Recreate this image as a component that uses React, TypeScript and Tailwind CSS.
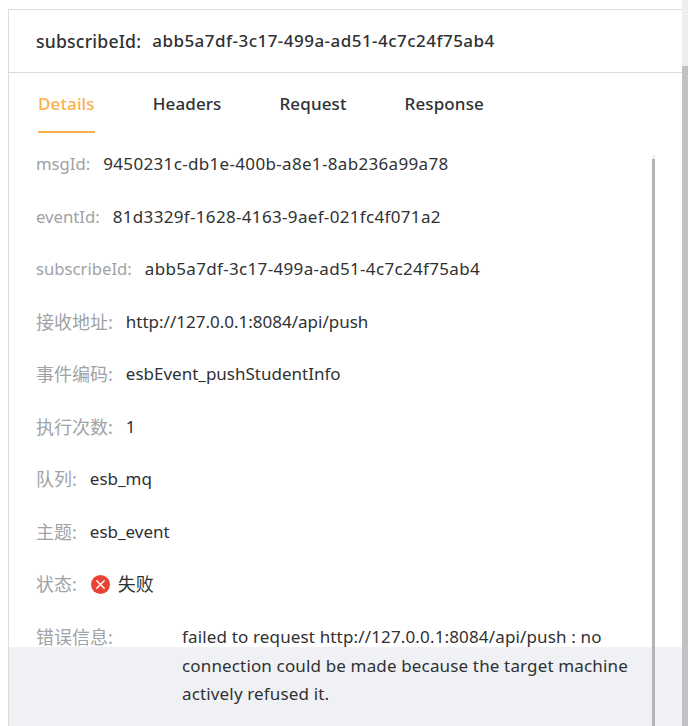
import React from "react";

const font = "[font-family:'Noto_Sans','Noto_Sans_CJK_SC',sans-serif]";

const rows: [string, string, boolean][] = [
  ["msgId:", "9450231c-db1e-400b-a8e1-8ab236a99a78", false],
  ["eventId:", "81d3329f-1628-4163-9aef-021fc4f071a2", false],
  ["subscribeId:", "abb5a7df-3c17-499a-ad51-4c7c24f75ab4", false],
  ["接收地址:", "http://127.0.0.1:8084/api/push", true],
  ["事件编码:", "esbEvent_pushStudentInfo", true],
  ["执行次数:", "1", true],
  ["队列:", "esb_mq", true],
  ["主题:", "esb_event", true],
];

function FailIcon() {
  return (
    <svg className="h-[19px] w-[19px] shrink-0" viewBox="0 0 19 19">
      <circle cx="9.5" cy="9.5" r="9.5" fill="#ea4335" />
      <path d="M5.8 5.8l7.4 7.4M13.2 5.8l-7.4 7.4" stroke="#fff" strokeWidth="1.5" strokeLinecap="round" />
    </svg>
  );
}

export default function App() {
  return (
    <div className={`relative h-[726px] w-[688px] overflow-hidden bg-white text-[17px] text-[#303133] ${font}`}>
      <div className="ml-2 mt-[9px] mr-[6px] h-[717px] border-l border-t border-[#dcdcdc]">
        <div className="flex h-[63px] items-center gap-[11px] border-b border-[#dcdcdc] pl-[27px] font-medium text-[#303133]">
          <span className="text-[17.6px] tracking-[0.2px]">subscribeId:</span>
          <span className="tracking-[0.47px]">abb5a7df-3c17-499a-ad51-4c7c24f75ab4</span>
        </div>
        <div className="flex gap-[58px] pl-[29px] pt-[18px] font-medium tracking-[0.12px]">
          <div className="h-[42px] border-b-2 border-[#fbb04c] text-[#fbb04c]">Details</div>
          <div>Headers</div>
          <div>Request</div>
          <div>Response</div>
        </div>
        <div className="flex flex-col pl-[27px] pt-[18px]">
          {rows.map(([label, value, cjk]) => (
            <div key={label} className="flex h-[52.5px] gap-[13px] leading-[26px]">
              <span className={cjk ? "text-[18px] text-[#a0a2a6]" : "text-[16.7px] text-[#a0a2a6]"}>{label}</span>
              <span className={cjk ? "" : "tracking-[0.33px]"}>{value}</span>
            </div>
          ))}
          <div className="flex h-[40px] items-start gap-[14px] leading-[26px]">
            <span className="text-[18px] text-[#a0a2a6]">状态:</span>
            <span className="flex h-[26px] items-center gap-[8px]">
              <FailIcon />
              <span className="text-[18px]">失败</span>
            </span>
          </div>
          <div className="relative z-10 mt-[12px] flex leading-[28.5px]">
            <span className="w-[146px] shrink-0 text-[18px] text-[#a0a2a6]">错误信息:</span>
            <span className="w-[450px] tracking-[0.15px]">
              failed to request http://127.0.0.1:8084/api/push : no connection could be made because the target machine
              actively refused it.
            </span>
          </div>
        </div>
      </div>
      <div className="absolute bottom-0 left-[9px] right-[6px] h-[79px] bg-[#eff1f5]" />
      <div className="absolute bottom-0 right-[33px] top-[159px] w-[3px] bg-[#b4b4b6]" />
      <div className="absolute right-[33px] top-[155px] h-[4px] w-[3px] bg-[#f1f1f1]" />
      <div className="absolute bottom-0 right-0 top-0 w-[6px] bg-[#eceef2]">
        <div className="mt-[66px] h-[660px] bg-[#bfc1c5]" />
      </div>
    </div>
  );
}
